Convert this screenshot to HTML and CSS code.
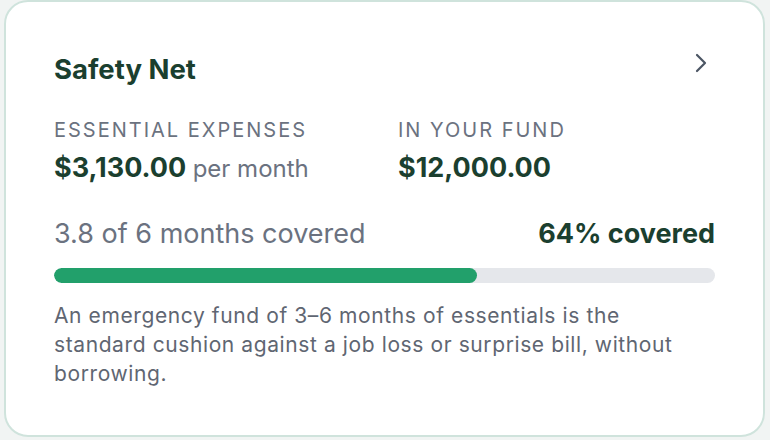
FILE: index.html
```html
<!DOCTYPE html>
<html>
    <head>
        <meta name="viewport" content="width=device-width, initial-scale=1" />
        <meta http-equiv="content-type" content="text/html; charset=utf-8" />
        <title>Safety Net</title>
        <link rel="stylesheet" href="styles.css">
    </head>
    <body>
        <div class="card">
            <div class="head">
                <h2>Safety Net</h2>
                <svg class="chev" width="14" height="22" viewBox="0 0 14 22">
                    <path d="M3 3 L11 11 L3 19" fill="none" stroke="#4b5563" stroke-width="2.2" stroke-linecap="round" stroke-linejoin="round"/>
                </svg>
            </div>
            <div class="stats">
                <div class="stat">
                    <div class="label">Essential Expenses</div>
                    <div class="value">$3,130.00 <span class="unit">per month</span></div>
                </div>
                <div class="stat">
                    <div class="label">In Your Fund</div>
                    <div class="value">$12,000.00</div>
                </div>
            </div>
            <div class="cover">
                <span class="months">3.8 of 6 months covered</span>
                <span class="pct">64% covered</span>
            </div>
            <div class="track"><div class="fill" style="width: 64%"></div></div>
            <p class="note">An emergency fund of 3–6 months of essentials is the standard cushion against a job loss or surprise bill, without borrowing.</p>
        </div>
    </body>
</html>
```

FILE: styles.css
```css
*{
    box-sizing: border-box;
    padding: 0;
    margin: 0;
}
body{
    background: #f1f4f3;
    font-family: Inter, "Noto Sans", sans-serif;
    color: #1b3f2f;
    padding: 0 5px 3px 4px;
}
.card{
    background: #fff;
    border: 2px solid #cfe3dc;
    border-radius: 24px;
    height: 437px;
    padding: 48px 48px 0 48px;
}
.head{
    display: flex;
    justify-content: space-between;
    align-items: center;
}
.head h2{
    font-size: 27.5px;
    font-weight: 700;
    color: #1b3f2f;
    line-height: 38px;
}
.chev{
    margin-right: 7px;
    margin-top: -12px;
}
.stats{
    display: flex;
    margin-top: 29px;
}
.stat{
    width: 344px;
    flex-shrink: 0;
}
.stat + .stat{
    width: auto;
    flex: 1;
}
.label{
    font-size: 20px;
    color: #6b7280;
    letter-spacing: 2px;
    text-transform: uppercase;
    line-height: 26px;
}
.value{
    font-size: 27px;
    font-weight: 700;
    color: #1b3f2f;
    line-height: 34px;
    margin-top: 8px;
}
.unit{
    font-size: 24px;
    font-weight: 400;
    color: #6b7280;
}
.cover{
    display: flex;
    justify-content: space-between;
    align-items: baseline;
    margin-top: 30px;
    line-height: 36px;
}
.months{
    font-size: 27px;
    color: #6b7280;
}
.pct{
    font-size: 27px;
    font-weight: 700;
    color: #1b3f2f;
}
.track{
    height: 15px;
    background: #e5e7eb;
    border-radius: 8px;
    margin-top: 16px;
    overflow: hidden;
}
.fill{
    height: 100%;
    background: #22a06b;
    border-radius: 8px;
}
.note{
    font-size: 21px;
    letter-spacing: 0.6px;
    line-height: 29px;
    color: #5f6672;
    margin-top: 18px;
    max-width: 640px;
}
```
